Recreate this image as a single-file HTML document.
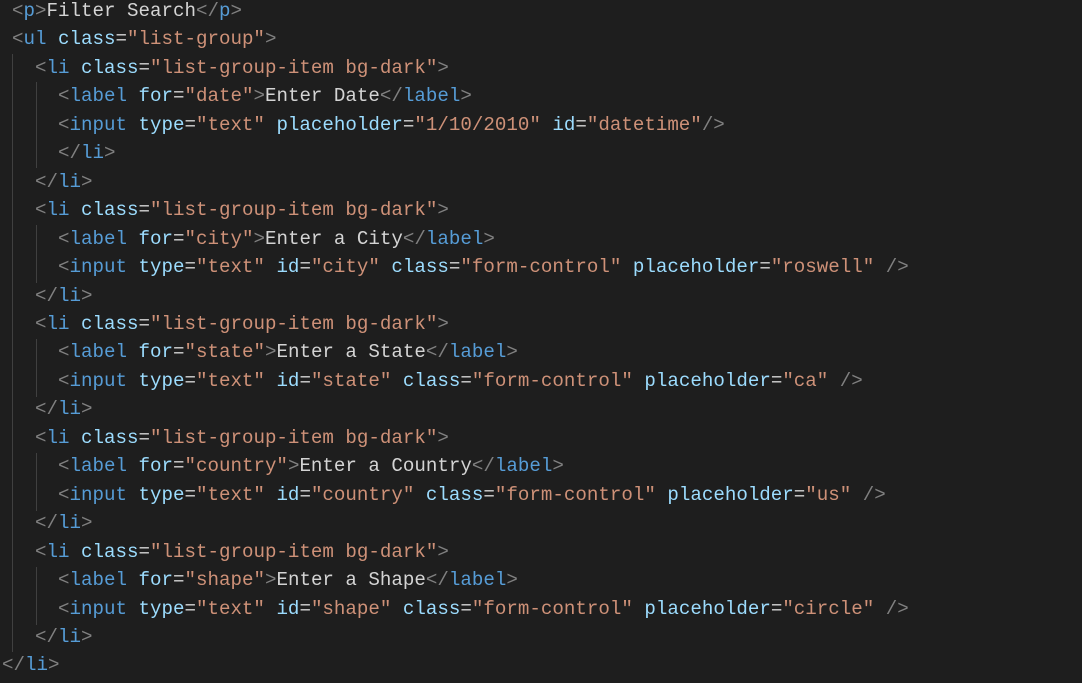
<!DOCTYPE html>
<html><head><meta charset="utf-8"><style>
body{margin:0;background:#1e1e1e;width:1082px;height:683px;overflow:hidden;position:relative}
pre{position:absolute;left:12px;top:-3px;margin:0;font-family:"Liberation Mono",monospace;font-size:19.17px;line-height:28.45px;color:#d4d4d4;white-space:pre}
.b{color:#808080}.t{color:#569cd6}.a{color:#9cdcfe}.s{color:#ce9178}
.g{position:absolute;width:1px;background:#404040}
</style></head><body>
<div class="g" style="left:12px;top:54px;height:598px"></div>
<div class="g" style="left:36px;top:82px;height:86px"></div>
<div class="g" style="left:36px;top:225px;height:58px"></div>
<div class="g" style="left:36px;top:339px;height:58px"></div>
<div class="g" style="left:36px;top:453px;height:58px"></div>
<div class="g" style="left:36px;top:567px;height:58px"></div>
<pre><span class="b">&lt;</span><span class="t">p</span><span class="b">&gt;</span>Filter Search<span class="b">&lt;/</span><span class="t">p</span><span class="b">&gt;</span>
<span class="b">&lt;</span><span class="t">ul</span> <span class="a">class</span>=<span class="s">"list-group"</span><span class="b">&gt;</span>
  <span class="b">&lt;</span><span class="t">li</span> <span class="a">class</span>=<span class="s">"list-group-item bg-dark"</span><span class="b">&gt;</span>
    <span class="b">&lt;</span><span class="t">label</span> <span class="a">for</span>=<span class="s">"date"</span><span class="b">&gt;</span>Enter Date<span class="b">&lt;/</span><span class="t">label</span><span class="b">&gt;</span>
    <span class="b">&lt;</span><span class="t">input</span> <span class="a">type</span>=<span class="s">"text"</span> <span class="a">placeholder</span>=<span class="s">"1/10/2010"</span> <span class="a">id</span>=<span class="s">"datetime"</span><span class="b">/&gt;</span>
    <span class="b">&lt;/</span><span class="t">li</span><span class="b">&gt;</span>
  <span class="b">&lt;/</span><span class="t">li</span><span class="b">&gt;</span>
  <span class="b">&lt;</span><span class="t">li</span> <span class="a">class</span>=<span class="s">"list-group-item bg-dark"</span><span class="b">&gt;</span>
    <span class="b">&lt;</span><span class="t">label</span> <span class="a">for</span>=<span class="s">"city"</span><span class="b">&gt;</span>Enter a City<span class="b">&lt;/</span><span class="t">label</span><span class="b">&gt;</span>
    <span class="b">&lt;</span><span class="t">input</span> <span class="a">type</span>=<span class="s">"text"</span> <span class="a">id</span>=<span class="s">"city"</span> <span class="a">class</span>=<span class="s">"form-control"</span> <span class="a">placeholder</span>=<span class="s">"roswell"</span> <span class="b">/&gt;</span>
  <span class="b">&lt;/</span><span class="t">li</span><span class="b">&gt;</span>
  <span class="b">&lt;</span><span class="t">li</span> <span class="a">class</span>=<span class="s">"list-group-item bg-dark"</span><span class="b">&gt;</span>
    <span class="b">&lt;</span><span class="t">label</span> <span class="a">for</span>=<span class="s">"state"</span><span class="b">&gt;</span>Enter a State<span class="b">&lt;/</span><span class="t">label</span><span class="b">&gt;</span>
    <span class="b">&lt;</span><span class="t">input</span> <span class="a">type</span>=<span class="s">"text"</span> <span class="a">id</span>=<span class="s">"state"</span> <span class="a">class</span>=<span class="s">"form-control"</span> <span class="a">placeholder</span>=<span class="s">"ca"</span> <span class="b">/&gt;</span>
  <span class="b">&lt;/</span><span class="t">li</span><span class="b">&gt;</span>
  <span class="b">&lt;</span><span class="t">li</span> <span class="a">class</span>=<span class="s">"list-group-item bg-dark"</span><span class="b">&gt;</span>
    <span class="b">&lt;</span><span class="t">label</span> <span class="a">for</span>=<span class="s">"country"</span><span class="b">&gt;</span>Enter a Country<span class="b">&lt;/</span><span class="t">label</span><span class="b">&gt;</span>
    <span class="b">&lt;</span><span class="t">input</span> <span class="a">type</span>=<span class="s">"text"</span> <span class="a">id</span>=<span class="s">"country"</span> <span class="a">class</span>=<span class="s">"form-control"</span> <span class="a">placeholder</span>=<span class="s">"us"</span> <span class="b">/&gt;</span>
  <span class="b">&lt;/</span><span class="t">li</span><span class="b">&gt;</span>
  <span class="b">&lt;</span><span class="t">li</span> <span class="a">class</span>=<span class="s">"list-group-item bg-dark"</span><span class="b">&gt;</span>
    <span class="b">&lt;</span><span class="t">label</span> <span class="a">for</span>=<span class="s">"shape"</span><span class="b">&gt;</span>Enter a Shape<span class="b">&lt;/</span><span class="t">label</span><span class="b">&gt;</span>
    <span class="b">&lt;</span><span class="t">input</span> <span class="a">type</span>=<span class="s">"text"</span> <span class="a">id</span>=<span class="s">"shape"</span> <span class="a">class</span>=<span class="s">"form-control"</span> <span class="a">placeholder</span>=<span class="s">"circle"</span> <span class="b">/&gt;</span>
  <span class="b">&lt;/</span><span class="t">li</span><span class="b">&gt;</span>
<span style="margin-left:-10px"><span class="b">&lt;/</span><span class="t">li</span><span class="b">&gt;</span></span></pre>
</body></html>
